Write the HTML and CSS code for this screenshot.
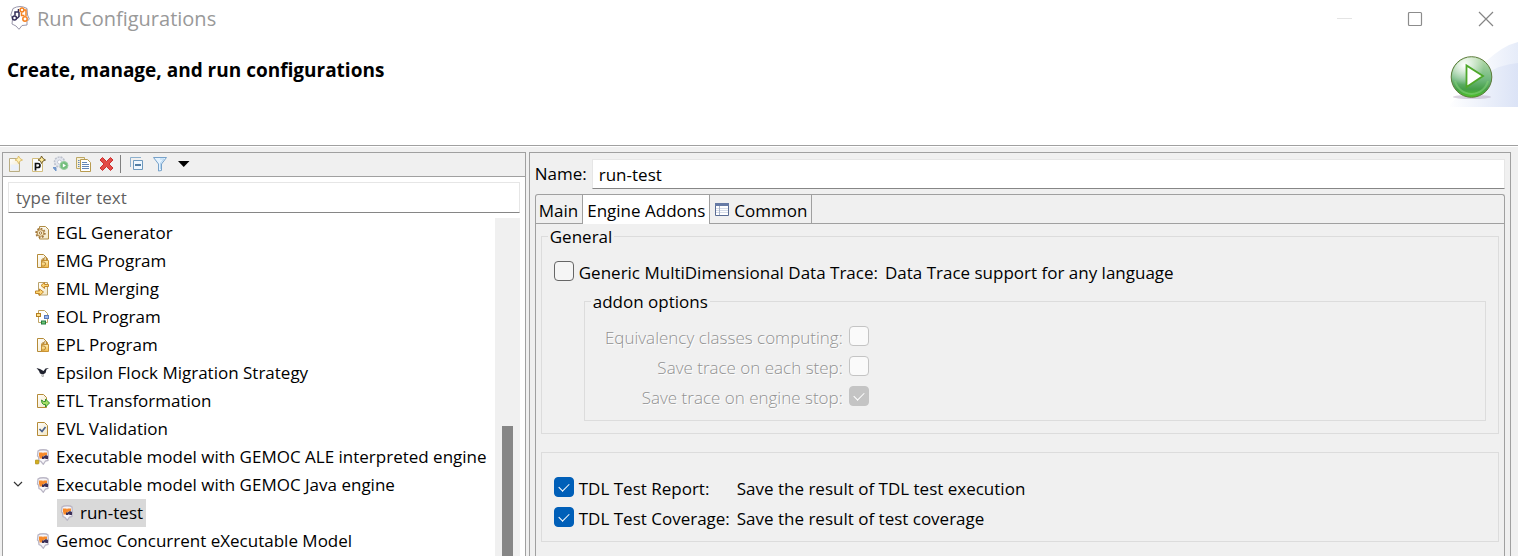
FILE: index.html
```html
<!DOCTYPE html>
<html lang="en">
<head>
<meta charset="utf-8">
<title>Run Configurations</title>
<link rel="stylesheet" href="styles.css">
</head>
<body>
<svg class="defs" width="0" height="0" aria-hidden="true">
  <defs>
    <linearGradient id="paper" x1="0" y1="0" x2="1" y2="1"><stop offset="0" stop-color="#fff"/><stop offset="1" stop-color="#f1e6c4"/></linearGradient>
    <linearGradient id="gold" x1="0" y1="0" x2="0" y2="1"><stop offset="0" stop-color="#fff0b8"/><stop offset="1" stop-color="#f0b848"/></linearGradient>
    <symbol id="head" viewBox="0 0 16 16">
      <path d="M3 2C5 .3 11.500.3 13 2L13.500 8 13 9.500V11.500L10.500 12 8.300 15.300 6 12.500 4 11.500 3.500 8 2.500 7Z" fill="#f6f5f9" stroke="#bbb7c6" stroke-width="1.300"/>
      <path d="M4 3.500h3.500L8 4.500 8.500 3.500H12V6L8.500 7 7 9.500H4.500V8L4 7Z" fill="#f6892a"/>
      <path d="M7 7.500H8.500L11 6l2 1v3h-2.500L10 9 9 10H7Z" fill="#3b3058"/>
    </symbol>
    <symbol id="lockdoc" viewBox="0 0 16 16">
      <path d="M2.500 1.500h6l3 3v10h-9Z" fill="url(#paper)" stroke="#b58b37"/>
      <path d="M6.500 7.500h7v7h-7Z" fill="url(#gold)" stroke="#c99335"/>
      <path d="M8.500 7V5.500Q10.500 2.500 12.500 5.500V7M10.500 6H7V9H9Q10.500 9 10.500 11T8.500 13H6" fill="none" stroke="#b98a38"/>
    </symbol>
  </defs>
</svg>
<header class="titlebar">
  <svg class="app-icon" viewBox="0 0 20 24">
    <path d="M3 2.500Q10-1.500 17 2.500L17.500 9 19.300 13 17 15.500V19L12 19.500 9 23.300 6 20 2 18 2.500 13 .8 9Z" fill="#fff" stroke="#9a97ab"/>
    <g fill="none" stroke-width="1.500"><circle cx="4.500" cy="12" r="2" stroke="#342c57"/><path d="M5 9.500V6h3.500V3M7 12.500l2-2V6" stroke="#342c57"/><circle cx="12" cy="4" r="1.900" stroke="#f58220"/><circle cx="15" cy="13" r="2.200" stroke="#f58220"/><path d="M14 4h2v6M11.500 6.500v3h3" stroke="#f58220"/></g>
  </svg>
  <span class="title">Run Configurations</span>
  <div class="window-buttons">
    <button aria-label="Minimize" disabled><svg viewBox="0 0 16 16"><path d="M1 7.500h15" stroke="#e4e4e4"/></svg></button>
    <button aria-label="Maximize"><svg viewBox="0 0 16 16"><rect x="1.500" y="1.500" width="13" height="13" rx="1" fill="none" stroke="#8c8c8c" stroke-width="1.200"/></svg></button>
    <button aria-label="Close"><svg viewBox="0 0 16 16"><path d="M1 1l14 14M15 1L1 15" stroke="#858585" stroke-width="1.200"/></svg></button>
  </div>
</header>
<section class="banner">
  <h1>Create, manage, and run configurations</h1>
  <svg class="banner-art" viewBox="0 0 70 68">
    <defs>
      <linearGradient id="sky" x1="0" x2="1"><stop offset=".3" stop-color="#fff"/><stop offset="1" stop-color="#e6ecf9"/></linearGradient>
      <linearGradient id="sky2" x1="0" x2="1"><stop offset="0" stop-color="#fff"/><stop offset="1" stop-color="#dbe3f6"/></linearGradient>
      <linearGradient id="ball" x1="0" y1="0" x2="0" y2="1"><stop offset="0" stop-color="#b9dcae"/><stop offset=".55" stop-color="#72b97f"/><stop offset=".8" stop-color="#459f48"/><stop offset="1" stop-color="#4fc52b"/></linearGradient>
      <radialGradient id="shine" cx=".32" cy=".2" r=".5"><stop offset="0" stop-color="#fff"/><stop offset="1" stop-color="#fff" stop-opacity="0"/></radialGradient>
    </defs>
    <path d="M0 66Q40 8 70 1V66Z" fill="url(#sky)"/>
    <path d="M0 66Q36 24 70 22V66Z" fill="url(#sky2)"/>
    <ellipse cx="24" cy="56" rx="19" ry="2" fill="#b6a8c0" opacity=".5"/>
    <circle cx="23.500" cy="36" r="20.300" fill="url(#ball)" stroke="#5c7a3a"/>
    <path d="M7 40A17 17 0 0 0 40 40" fill="none" stroke="#82cf76" stroke-width="2" opacity=".6"/>
    <circle cx="23.500" cy="36" r="19.500" fill="url(#shine)"/>
    <path d="M18.500 24.500V46L35 35Z" fill="#fff" stroke="#4ea82a" stroke-width="1.800"/>
  </svg>
</section>
<main>
  <section class="panel configs">
    <div class="toolbar">
      <button aria-label="New launch configuration"><svg viewBox="0 0 16 16"><path d="M2.500 2.500h7l3 4v9h-10Z" fill="url(#paper)" stroke="#b9ad83"/><path d="M3.500 8.500h8v6h-8Z" fill="#eaf0fa"/><path d="M11.500 0 13 2.500l2.500 1.500-2.500 1-1.500 2.500L10.500 5 8 4l2.500-1.500Z" fill="#fff2b4" stroke="#d8b45a" stroke-width=".8"/></svg></button>
      <button aria-label="New prototype"><svg viewBox="0 0 16 16"><path d="M2.500 2.500h7l3 4v9h-10Z" fill="#fdfdfd" stroke="#d2bd7c"/><path d="M5.500 14.500v-7h2.500q2 0 2 2T8 11.500h-2" fill="none" stroke="#111" stroke-width="1.700"/><path d="M11.500 0 13 2.500l2.500 1.500-2.500 1-1.500 2.500L10.500 5 8 4l2.500-1.500Z" fill="#ffec9c" stroke="#66501b" stroke-width=".9"/></svg></button>
      <button aria-label="Export"><svg viewBox="0 0 16 16"><circle cx="6.500" cy="6" r="5" fill="#e3e6ee" stroke="#bdc2cd" stroke-width="1.600" stroke-dasharray="2 1"/><circle cx="6.500" cy="6" r="2" fill="#fff" stroke="#c5c9d4"/><circle cx="11" cy="9.500" r="4" fill="#73bd7c" stroke="#9ad0a0"/><path d="M9.800 7.500v4l3.200-2Z" fill="#fff"/><path d="M0 11.500h3v3.500Z" fill="#7196cb" stroke="#7196cb"/></svg></button>
      <button aria-label="Duplicate"><svg viewBox="0 0 16 16"><path d="M.5 1.500h8v11h-8Z" fill="#f7f0d7" stroke="#bda866"/><path d="M4.500 3.500h7l3 3v9h-10Z" fill="#fff" stroke="#b89b50"/><path d="M2 4.500h1.500M2 6.500h1.500M2 8.500h1.500M2 10.500h1.500M6 6.500h5M6 8.500h7M6 10.500h7M6 12.500h7" stroke="#6386b8"/></svg></button>
      <button aria-label="Delete"><svg viewBox="0 0 16 16"><path d="M3.500 1.500 7.500 5.500l4-4L14 4l-4 4 4 4-2.500 2.500-4-4-4 4L1 12l4-4-4-4Z" fill="#e24b46" stroke="#cc2f30"/></svg></button>
      <span class="separator"></span>
      <button aria-label="Collapse all"><svg viewBox="0 0 16 16"><path d="M1.500 11V1.500H12" fill="none" stroke="#8db0cd"/><path d="M4.500 4.500h9v9h-9Z" fill="#eef7ff" stroke="#6c98bd"/><path d="M6 9h6" stroke="#1e5687" stroke-width="1.500"/></svg></button>
      <button aria-label="Filter"><svg viewBox="0 0 16 16"><path d="M1.500 1.500h13L9.500 8v6.500l-3 .5V8Z" fill="#e5f3ff" stroke="#77a2ca"/><path d="M8 3h4L8.500 7v6" fill="none" stroke="#b7d6ef"/></svg></button>
      <button aria-label="Filter menu"><svg viewBox="0 0 16 16"><path d="M3 5h11.500L8.700 11Z" fill="#000"/></svg></button>
    </div>
    <div class="configs-body">
      <input class="field" type="text" placeholder="type filter text" aria-label="Filter">
      <div class="tree-area">
        <ul class="tree">
          <li><svg viewBox="0 0 16 16"><path d="M4.500 1.500h6l3 3v9.500h-9Z" fill="url(#paper)" stroke="#b08c44"/><circle cx="5.500" cy="8" r="4.300" fill="#f1dfad" stroke="#a1773d" stroke-width="1.800" stroke-dasharray="1.800 1.500"/><circle cx="5.500" cy="8" r="3.300" fill="#f8eac3" stroke="#b08950"/><circle cx="5.500" cy="8" r="1.200" fill="#fff" stroke="#a1773d"/></svg>EGL Generator</li>
          <li><svg><use href="#lockdoc"/></svg>EMG Program</li>
          <li><svg viewBox="0 0 16 16"><path d="M3.500 1.500h9v12.500h-9Z" fill="url(#paper)" stroke="#b9a26b"/><path d="M13.500 3.500h-4v-2L6 4.500l3.500 3v-2h4ZM.5 10h4V8L8.500 11l-4 3.500v-2h-4Z" fill="#ffd875" stroke="#c2872b"/></svg>EML Merging</li>
          <li><svg viewBox="0 0 16 16"><path d="M3.500 1.500h6l3 3v9h-9Z" fill="#fff" stroke="#c0a566"/><rect x="1.500" y="4.500" width="4" height="3" fill="#ffe08a" stroke="#b57f20"/><rect x="9.500" y="6.500" width="4" height="3" fill="#9ab7ee" stroke="#5b79b8"/><rect x="6.500" y="12" width="4" height="3" fill="#6dc478" stroke="#247c3c"/></svg>EOL Program</li>
          <li><svg><use href="#lockdoc"/></svg>EPL Program</li>
          <li><svg viewBox="0 0 16 16"><path d="M1.500 3l3.500 1L8.500 6l2-2.500 3.500-.5-2.500 1.500L10.500 8 8 9.500 5 8.500 4 6Z" fill="#20222e"/><path d="M6.500 9.500l1 2.500M8.500 9.500L8 12" stroke="#aaa"/></svg>Epsilon Flock Migration Strategy</li>
          <li><svg viewBox="0 0 16 16"><path d="M2.500 1.500h6l3 3v10h-9Z" fill="url(#paper)" stroke="#b58b37"/><path d="M6.500 7 8.500 8.500h2V6l4 4-4 4v-2.500H8.500Q6.500 10.500 6.500 7Z" fill="#a5df65" stroke="#35932f"/></svg>ETL Transformation</li>
          <li><svg viewBox="0 0 16 16"><path d="M2.500 1.500h7l3 3v10h-10Z" fill="url(#paper)" stroke="#b58b37"/><path d="M4.500 8l2.500 2.500L10.500 6" fill="none" stroke="#4b618c" stroke-width="1.700"/></svg>EVL Validation</li>
          <li><svg viewBox="0 0 16 16"><use href="#head"/><rect x="0" y="11" width="4" height="4" rx="1" fill="#d3ae22" stroke="#a38a2b" stroke-width=".6"/></svg>Executable model with GEMOC ALE interpreted engine</li>
          <li class="open"><svg class="chevron" viewBox="0 0 10 16"><path d="M1 5l4 4 4-4" fill="none" stroke="#333" stroke-width="1.200"/></svg><svg><use href="#head"/></svg>Executable model with GEMOC Java engine</li>
          <li class="child"><span class="selected"><svg><use href="#head"/></svg>run-test</span></li>
          <li><svg><use href="#head"/></svg>Gemoc Concurrent eXecutable Model</li>
        </ul>
        <div class="scrollbar"><div class="thumb"></div></div>
      </div>
    </div>
  </section>
  <section class="panel editor">
    <div class="name-row">
      <label for="name">Name:</label>
      <input class="field" id="name" type="text" value="run-test">
    </div>
    <div class="tab-folder">
      <div class="tabs" role="tablist">
        <button role="tab">Main</button>
        <button role="tab" aria-selected="true">Engine Addons</button>
        <button role="tab"><svg viewBox="0 0 16 16"><path d="M1.500 2.500h13v12h-13Z" fill="#fff" stroke="#5a6c94"/><path d="M1 2h14v3H1Z" fill="#667aa5"/><path d="M2 7.500h12M2 9.500h12M2 11.500h12" stroke="#d4dbe8"/><path d="M5.500 5v9" stroke="#a9b4ca"/></svg>Common</button>
      </div>
      <fieldset class="general">
        <legend>General</legend>
        <div class="check-row">
          <input type="checkbox" id="trace">
          <label for="trace">Generic MultiDimensional Data Trace:</label>
          <span>Data Trace support for any language</span>
        </div>
        <fieldset class="options" disabled>
          <legend>addon options</legend>
          <label for="equiv">Equivalency classes computing:</label><input type="checkbox" id="equiv">
          <label for="step">Save trace on each step:</label><input type="checkbox" id="step">
          <label for="stop">Save trace on engine stop:</label><input type="checkbox" id="stop" checked>
        </fieldset>
      </fieldset>
      <fieldset class="tests" aria-label="Tests">
        <input type="checkbox" id="report" checked><label for="report">TDL Test Report:</label><span>Save the result of TDL test execution</span>
        <input type="checkbox" id="coverage" checked><label for="coverage">TDL Test Coverage:</label><span>Save the result of test coverage</span>
      </fieldset>
    </div>
  </section>
</main>
</body>
</html>
```
FILE: styles.css
```css
* { box-sizing: border-box; }

body {
  margin: 0;
  height: 100vh;
  display: flex;
  flex-direction: column;
  overflow: hidden;
  background: #fff;
  color: #000;
  font: 17px/24px "Open Sans", "Noto Sans", sans-serif;
  white-space: nowrap;
}

button, input { font: inherit; color: inherit; }

button {
  padding: 0;
  border: 0;
  background: none;
}

svg { flex: none; display: block; }
.defs { position: absolute; }

.titlebar {
  display: flex;
  align-items: center;
  height: 38px;
  padding-left: 10px;
  color: #999;
}
.app-icon { width: 20px; height: 24px; margin-bottom: 2px; }
.title { margin-left: 7px; font-size: 20px; }
.window-buttons {
  display: flex;
  gap: 55px;
  margin-left: auto;
  padding-right: 24px;
}
.window-buttons svg { width: 16px; height: 16px; }

.banner {
  display: flex;
  justify-content: space-between;
  align-items: flex-start;
  height: 108px;
  border-bottom: 1px solid #a0a0a0;
}
.banner h1 {
  margin: 20px 0 0 7px;
  font-size: 19px;
  line-height: 24px;
}
.banner-art { width: 70px; height: 68px; margin-top: 3px; }

main {
  flex: 1;
  min-height: 0;
  display: flex;
  gap: 3px;
  padding: 5px 7px 0 2px;
  border-top: 1px solid #fff;
  background: #f0f0f0;
}

.panel {
  display: flex;
  flex-direction: column;
  min-width: 0;
  border: 1px solid #a0a0a0;
  border-bottom: 0;
}
.configs { flex: 527 1 0; }
.editor { flex: 980 1 0; padding: 6px 5px 0; }

.toolbar {
  display: flex;
  align-items: center;
  gap: 7px;
  height: 24px;
  padding: 0 0 2px 4px;
  border-bottom: 1px solid #a0a0a0;
}
.toolbar svg { width: 16px; height: 16px; }
.separator { width: 1px; height: 18px; margin: 0 1px 0 -2px; background: #808080; }

.configs-body {
  flex: 1;
  display: flex;
  flex-direction: column;
  min-height: 0;
  padding: 5px 5px 0;
  background: #fff;
}

.field {
  min-width: 0;
  width: 100%;
  height: 31px;
  padding: 0 7px;
  border: 1px solid #e6e6e6;
  border-bottom-color: #868686;
  border-radius: 0;
  background: #fff;
}
.field::placeholder { color: #5f5f5f; opacity: 1; }

.tree-area { flex: 1; display: flex; min-height: 0; margin-top: 5px; }
.tree {
  flex: 1;
  min-width: 0;
  margin: 1px 0 0;
  padding: 0;
  list-style: none;
}
.tree li {
  display: flex;
  align-items: center;
  gap: 5px;
  height: 28px;
  padding-left: 27px;
}
.tree svg { width: 16px; height: 16px; }
.tree .open { padding-left: 5px; }
.tree .chevron { width: 10px; margin-right: 7px; }
.tree .child { padding-left: 49px; }
.selected {
  display: flex;
  align-items: center;
  gap: 5px;
  height: 28px;
  padding: 0 3px 0 2px;
  background: #d9d9d9;
}
.scrollbar {
  display: flex;
  width: 25px;
  padding: 208px 7px 0;
  background: #f0f0f0;
}
.thumb { flex: 1; background: #868686; }

.name-row {
  display: flex;
  align-items: center;
  gap: 5px;
}
.name-row .field { flex: 1; height: 30px; padding: 0 6px; }

.tab-folder {
  flex: 1;
  margin-top: 5px;
  border: 1px solid #a0a0a0;
  border-bottom: 0;
  border-radius: 3px 3px 0 0;
}
.tabs {
  display: flex;
  height: 29px;
  border-bottom: 1px solid #a0a0a0;
}
.tabs button {
  display: flex;
  align-items: center;
  gap: 4px;
  height: 28px;
  padding: 3px 4px 0 3px;
  border-right: 1px solid #a0a0a0;
}
.tabs button[aria-selected="true"] { height: 29px; padding: 2px 4px 0; background: #fff; }
.tabs svg { width: 16px; height: 16px; margin: 0 0 4px 1px; }

fieldset {
  min-width: 0;
  margin: 0;
  padding: 0;
  border: 1px solid #dcdcdc;
}
legend { margin-left: -6px; padding: 2px 2px 0; line-height: 22px; }

.general { margin: 0 5px; padding: 10px 12px 12px; }
.check-row { display: flex; align-items: center; height: 30px; }
.check-row label { margin: 0 7px 0 5px; }
.options {
  display: grid;
  grid-template-columns: 246px 20px;
  grid-auto-rows: 30px;
  column-gap: 6px;
  align-items: center;
  margin: 1px 0 0 30px;
  padding: 10px 12px 7px;
}
.options label {
  justify-self: end;
  color: #929292;
  font-weight: 300;
  text-shadow: 1px 1px #fff;
}

.tests {
  display: grid;
  grid-template-columns: 20px 153px 1fr;
  grid-auto-rows: 30px;
  column-gap: 5px;
  align-items: center;
  margin: 18px 5px 0;
  padding: 21px 12px 7px;
}

input[type="checkbox"] {
  appearance: none;
  display: grid;
  place-items: center;
  width: 20px;
  height: 20px;
  margin: 0 0 4px;
  border: 1px solid #666;
  border-radius: 4px;
  background: #f5f5f5;
}
input[type="checkbox"]:checked { border-color: #005fb8; background: #005fb8; }
input[type="checkbox"]:checked::after {
  content: "";
  width: 9px;
  height: 5px;
  margin-bottom: 3px;
  border: solid #fff;
  border-width: 0 0 1px 1px;
  transform: rotate(-45deg);
}
input[type="checkbox"]:disabled { border-color: #c4c4c4; background: #fafafa; }
input[type="checkbox"]:disabled:checked { background: #c4c4c4; }
```
